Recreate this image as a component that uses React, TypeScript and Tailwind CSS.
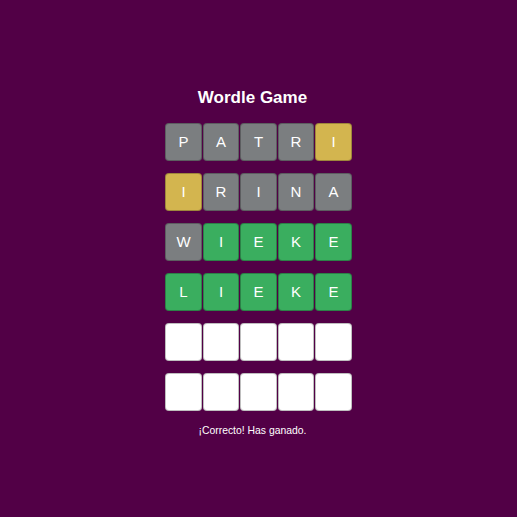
import React from 'react';

type Tile = { letter: string; state: 'absent' | 'present' | 'correct' | 'empty' };

const guesses: string[] = ['PATRI', 'IRINA', 'WIEKE', 'LIEKE', '', ''];
const target = 'LIEKE';

function score(word: string): Tile[] {
  if (!word) return Array.from({ length: 5 }, () => ({ letter: '', state: 'empty' as const }));
  return word.split('').map((ch, i) => {
    if (target[i] === ch) return { letter: ch, state: 'correct' as const };
    if (target.includes(ch)) return { letter: ch, state: 'present' as const };
    return { letter: ch, state: 'absent' as const };
  });
}

// PATRI's final I shows yellow, IRINA's first I yellow, rest grey (as in the screenshot)
const overrides: Record<string, Tile['state'][]> = {
  PATRI: ['absent', 'absent', 'absent', 'absent', 'present'],
  IRINA: ['present', 'absent', 'absent', 'absent', 'absent'],
};

const tileColor: Record<Tile['state'], string> = {
  absent: 'bg-[#7b7e80] text-white',
  present: 'bg-[#d3b54f] text-white',
  correct: 'bg-[#3aae5f] text-white',
  empty: 'bg-white',
};

export default function App() {
  return (
    <main className="min-h-screen bg-[#520046] flex flex-col items-center pt-[88px] font-['Liberation_Sans',Arial,sans-serif]">
      <h1 className="mr-[12px] text-[17px] leading-[20px] font-bold text-white">Wordle Game</h1>

      {/* Board */}
      <div className="mt-[15px] flex flex-col gap-y-[12px]">
        {guesses.map((word, r) => {
          let tiles = score(word);
          if (overrides[word]) tiles = tiles.map((t, i) => ({ ...t, state: overrides[word][i] }));
          return (
            <div key={r} className="flex gap-x-[1px]">
              {tiles.map((t, i) => (
                <div
                  key={i}
                  className={`w-[36.5px] h-[38px] rounded border border-black/25 flex items-center justify-center text-[15px] ${tileColor[t.state]}`}
                >
                  {t.letter}
                </div>
              ))}
            </div>
          );
        })}
      </div>

      <p className="mt-[13px] mr-[12px] text-[10.4px] leading-[14px] text-white">¡Correcto! Has ganado.</p>
    </main>
  );
}
